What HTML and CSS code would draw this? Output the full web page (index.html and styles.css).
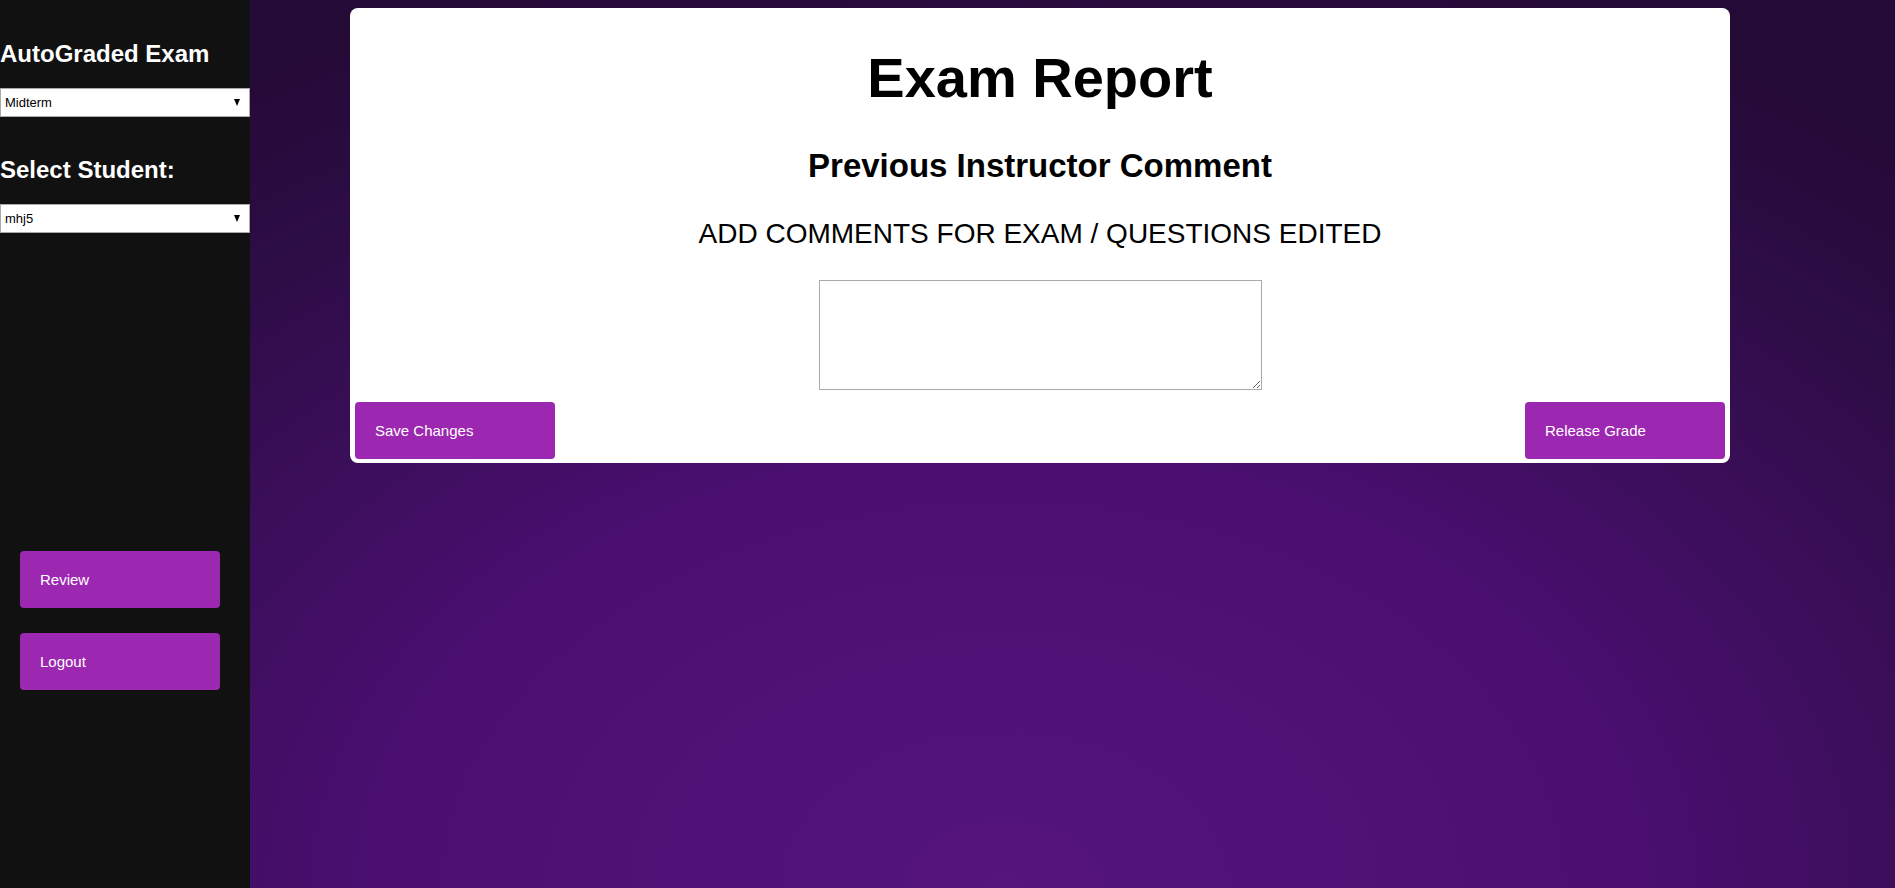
FILE: index.html
```html
<!DOCTYPE html>
<html lang="en">
<head>
<meta charset="utf-8">
<title>Exam Report</title>
<link rel="stylesheet" href="styles.css">
</head>
<body>
<div class="layout">
  <aside class="sidebar">
    <h2 class="side-title first">AutoGraded Exam</h2>
    <div class="select-wrap">
      <select class="side-select"><option>Midterm</option></select>
      <span class="arrow"></span>
    </div>
    <h2 class="side-title second">Select Student:</h2>
    <div class="select-wrap">
      <select class="side-select"><option>mhj5</option></select>
      <span class="arrow"></span>
    </div>
    <nav class="side-nav">
      <button class="btn">Review</button>
      <button class="btn">Logout</button>
    </nav>
  </aside>
  <main class="main">
    <section class="card">
      <h1 class="title">Exam Report</h1>
      <h2 class="subtitle">Previous Instructor Comment</h2>
      <p class="label">ADD COMMENTS FOR EXAM / QUESTIONS EDITED</p>
      <textarea class="comment"></textarea>
      <div class="actions">
        <button class="btn">Save Changes</button>
        <button class="btn">Release Grade</button>
      </div>
    </section>
  </main>
</div>
</body>
</html>
```

FILE: styles.css
```css
* { box-sizing: border-box; }
html, body {
  margin: 0;
  height: 100%;
}
body {
  font-family: "Liberation Sans", Arial, sans-serif;
  background: radial-gradient(ellipse 75% 110% at 53% 100%, #55157c 0%, #4a0f70 45%, #2e0d47 80%, #240a36 100%);
  background-color: #2a0b40;
  overflow: hidden;
}
.layout {
  display: flex;
  height: 888px;
}
.sidebar {
  width: 250px;
  flex: 0 0 250px;
  background: #111111;
  display: flex;
  flex-direction: column;
}
.side-title {
  color: #ffffff;
  font-size: 24px;
  font-weight: bold;
  line-height: 28px;
  margin: 0 0 20px 0;
}
.side-title.first { margin-top: 40px; }
.side-title.second { margin-top: 39px; }
.select-wrap {
  position: relative;
  width: 250px;
  height: 29px;
}
.side-select {
  appearance: none;
  -webkit-appearance: none;
  width: 250px;
  height: 29px;
  border: 1px solid #a9a9a9;
  background: #ffffff;
  color: #000000;
  font-family: "Liberation Sans", Arial, sans-serif;
  font-size: 13px;
  padding: 0 0 0 4px;
  margin: 0;
  border-radius: 0;
}
.arrow {
  position: absolute;
  right: 10px;
  top: 11px;
  width: 0;
  height: 0;
  border-left: 3.5px solid transparent;
  border-right: 3.5px solid transparent;
  border-top: 7px solid #000;
  pointer-events: none;
}
.side-nav {
  display: flex;
  flex-direction: column;
  gap: 25px;
  margin-top: 318px;
  padding-left: 20px;
}
.btn {
  width: 200px;
  height: 57px;
  background: #9c27b0;
  color: #ffffff;
  border: none;
  border-radius: 4px;
  text-align: left;
  padding: 0 20px;
  font-family: "Liberation Sans", Arial, sans-serif;
  font-size: 15px;
  cursor: pointer;
}
.main {
  flex: 1;
  padding: 8px 0 0 100px;
}
.card {
  display: flow-root;
  width: 1380px;
  background: #ffffff;
  border-radius: 8px;
  padding: 0 5px 4px;
  text-align: center;
  color: #000000;
}
.title {
  font-size: 56px;
  font-weight: bold;
  line-height: 64px;
  margin: 38px 0 0 0;
}
.subtitle {
  font-size: 33px;
  font-weight: bold;
  line-height: 38px;
  margin: 37px 0 0 0;
}
.label {
  font-size: 28px;
  font-weight: normal;
  line-height: 32px;
  margin: 33px 0 0 0;
}
.comment {
  display: block;
  width: 443px;
  height: 110px;
  margin: 30px auto 0;
  border: 1px solid #a9a9a9;
  font-family: "Liberation Mono", monospace;
  font-size: 13px;
}
.actions {
  display: flex;
  justify-content: space-between;
  margin-top: 12px;
}
```
